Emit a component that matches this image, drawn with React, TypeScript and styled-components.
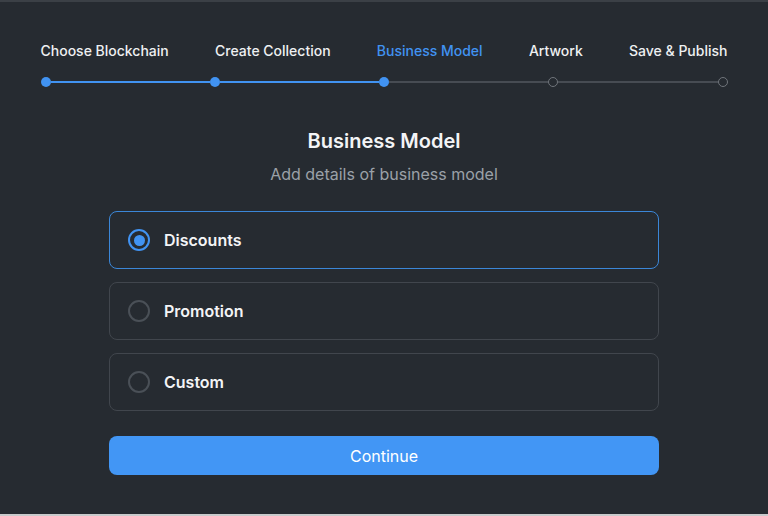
import { Fragment, useState } from "react";
import styled, { createGlobalStyle } from "styled-components";

const GlobalStyle = createGlobalStyle`
  html, body {
    margin: 0;
    padding: 0;
    background: #262b31;
  }
  body {
    font-family: Inter, "Noto Sans", "Liberation Sans", sans-serif;
    -webkit-font-smoothing: antialiased;
  }
  * { box-sizing: border-box; }
`;

const Page = styled.div`
  width: 768px;
  height: 516px;
  background: #262b31;
  border-top: 2px solid #3b4046;
  border-bottom: 2px solid #c9cacc;
  display: flex;
  flex-direction: column;
  align-items: center;
  overflow: hidden;
`;

const Stepper = styled.div`
  width: 687px;
  margin-top: 40px;
  display: flex;
  flex-direction: column;
  gap: 17px;
`;

const Labels = styled.div`
  display: flex;
  justify-content: space-between;
`;

const StepLabel = styled.span<{ $current?: boolean }>`
  font-size: 14px;
  line-height: 18px;
  font-weight: 500;
  color: ${(p) => (p.$current ? "#4193f2" : "#eef0f2")};
`;

const Track = styled.div`
  display: flex;
  align-items: center;
  height: 10px;
`;

const Dot = styled.span<{ $done: boolean }>`
  width: 10px;
  height: 10px;
  border-radius: 50%;
  flex: none;
  background: ${(p) => (p.$done ? "#4193f2" : "#262b31")};
  border: ${(p) => (p.$done ? "none" : "1.5px solid #70757b")};
`;

const Line = styled.span<{ $done: boolean }>`
  flex: 1;
  height: 2px;
  background: ${(p) => (p.$done ? "#4193f2" : "#474c53")};
`;

const Title = styled.h1`
  margin: 42px 0 0;
  font-size: 20px;
  line-height: 24px;
  font-weight: 600;
  color: #f3f4f6;
`;

const Subtitle = styled.p`
  margin: 11px 0 0;
  font-size: 16px;
  line-height: 20px;
  color: #9ba1a8;
`;

const Options = styled.div`
  width: 550px;
  margin-top: 27px;
  display: flex;
  flex-direction: column;
  gap: 13px;
`;

const Option = styled.button<{ $selected: boolean }>`
  height: 58px;
  display: flex;
  align-items: center;
  gap: 14px;
  padding: 0 18px;
  background: transparent;
  border: 1px solid ${(p) => (p.$selected ? "#3b87d8" : "#41464d")};
  border-radius: 8px;
  cursor: pointer;
  font-family: inherit;
  text-align: left;
`;

const Radio = styled.span<{ $selected: boolean }>`
  width: 22px;
  height: 22px;
  border-radius: 50%;
  flex: none;
  display: flex;
  align-items: center;
  justify-content: center;
  border: 2.5px solid ${(p) => (p.$selected ? "#4193f2" : "#4a5057")};

  &::after {
    content: "";
    width: 11px;
    height: 11px;
    border-radius: 50%;
    background: #4193f2;
    display: ${(p) => (p.$selected ? "block" : "none")};
  }
`;

const OptionText = styled.span`
  font-size: 16px;
  font-weight: 600;
  color: #f3f4f6;
`;

const Continue = styled.button`
  width: 550px;
  height: 39px;
  margin-top: 25px;
  border: none;
  border-radius: 8px;
  background: #4296f5;
  color: #ffffff;
  font-family: inherit;
  font-size: 16px;
  font-weight: 400;
  cursor: pointer;
`;

const steps = [
  "Choose Blockchain",
  "Create Collection",
  "Business Model",
  "Artwork",
  "Save & Publish",
];
const currentStep = 2;
const models = ["Discounts", "Promotion", "Custom"];

export default function App() {
  const [selected, setSelected] = useState("Discounts");

  return (
    <>
      <GlobalStyle />
      <Page>
        <Stepper>
          <Labels>
            {steps.map((s, i) => (
              <StepLabel key={s} $current={i === currentStep}>
                {s}
              </StepLabel>
            ))}
          </Labels>
          <Track>
            {steps.map((s, i) => (
              <Fragment key={s}>
                {i > 0 && <Line $done={i <= currentStep} />}
                <Dot $done={i <= currentStep} />
              </Fragment>
            ))}
          </Track>
        </Stepper>

        <Title>Business Model</Title>
        <Subtitle>Add details of business model</Subtitle>

        <Options>
          {models.map((m) => (
            <Option key={m} $selected={m === selected} onClick={() => setSelected(m)}>
              <Radio $selected={m === selected} />
              <OptionText>{m}</OptionText>
            </Option>
          ))}
        </Options>

        <Continue>Continue</Continue>
      </Page>
    </>
  );
}
